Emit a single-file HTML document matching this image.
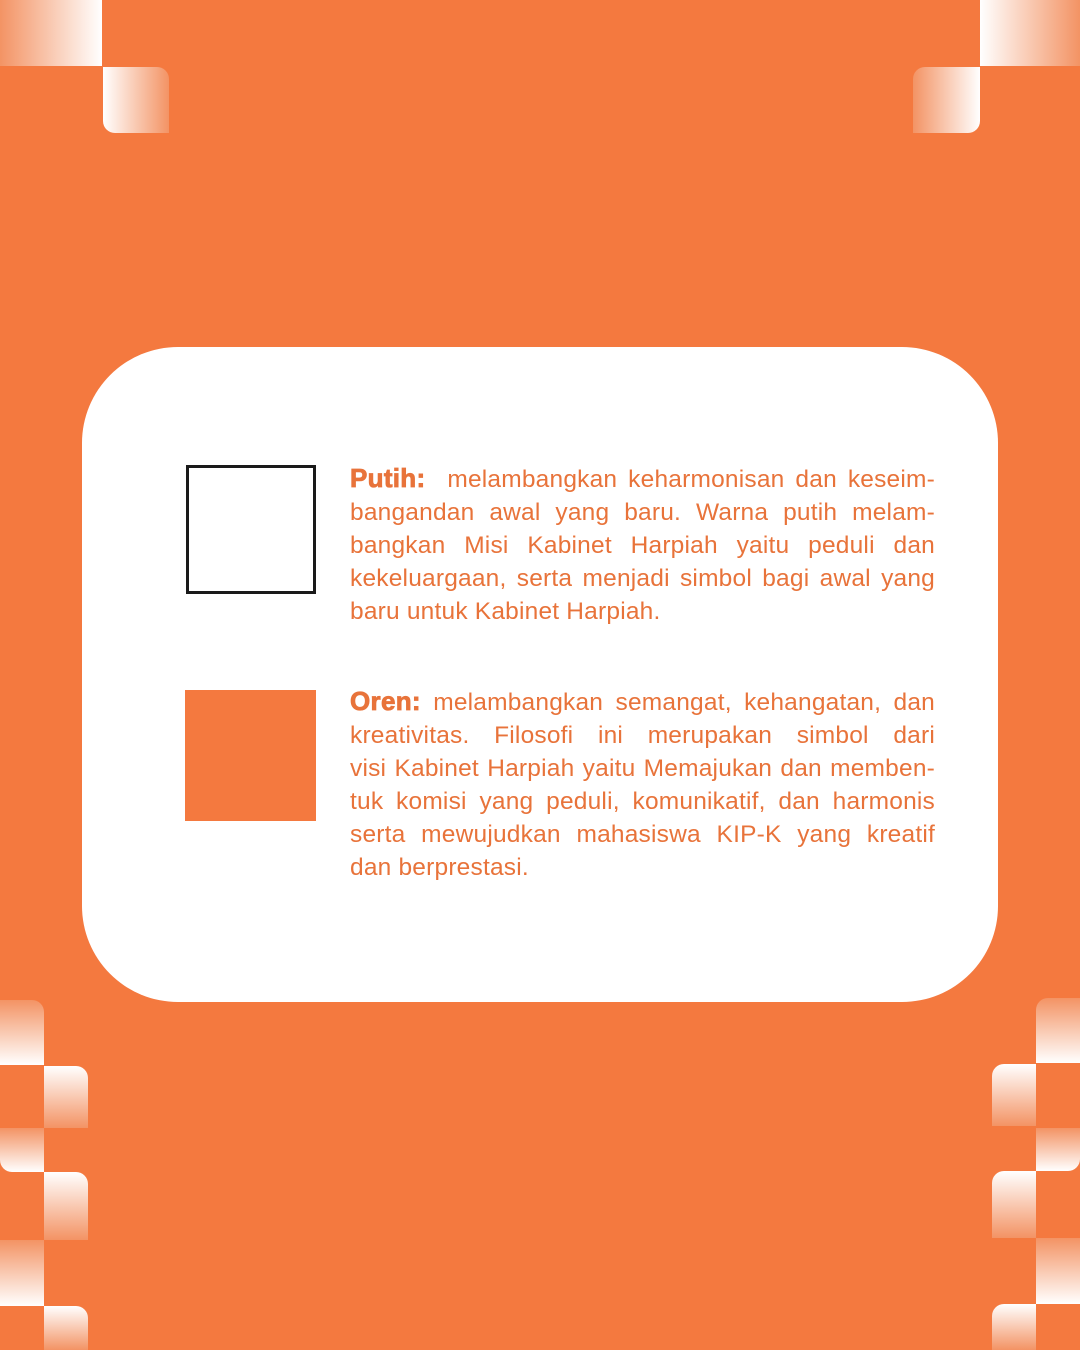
<!DOCTYPE html>
<html><head><meta charset="utf-8"><style>
*{margin:0;padding:0;box-sizing:border-box}
body{width:1080px;height:1350px;background:#F4793F;position:relative;overflow:hidden;font-family:"Liberation Sans",sans-serif}
.b{position:absolute}
.lr{background:linear-gradient(to right,#F39364,#fff)}
.rl{background:linear-gradient(to right,#fff,#F39364)}
.tb{background:linear-gradient(to bottom,#F39364,#fff)}
.bt{background:linear-gradient(to bottom,#fff,#F39364)}
.card{position:absolute;left:82px;top:347px;width:916px;height:655px;background:#fff;border-radius:96px}
.sq1{position:absolute;left:186px;top:465px;width:130px;height:129px;border:3px solid #1a1a1a}
.sq2{position:absolute;left:185px;top:690px;width:131px;height:131px;background:#F4793F}
.txt{position:absolute;left:350px;width:585px;color:#E8733A;font-size:24.5px;line-height:33px;letter-spacing:0.2px}
.txt div{text-align:justify;text-align-last:justify;white-space:nowrap}
.txt div.last{text-align-last:left}
.txt b{font-weight:900;font-size:26px;letter-spacing:0.3px;-webkit-text-stroke:0.8px #E8733A}
</style></head><body>
<div class="b lr" style="left:0;top:0;width:102px;height:66px"></div>
<div class="b rl" style="left:103px;top:67px;width:66px;height:66px;border-radius:0 12px 0 12px"></div>
<div class="b rl" style="left:980px;top:0;width:100px;height:66px"></div>
<div class="b lr" style="left:913px;top:67px;width:67px;height:66px;border-radius:12px 0 12px 0"></div>

<div class="b tb" style="left:0;top:1000px;width:44px;height:65px;border-radius:0 12px 0 0"></div>
<div class="b bt" style="left:44px;top:1066px;width:44px;height:62px;border-radius:0 12px 0 0"></div>
<div class="b tb" style="left:0;top:1128px;width:44px;height:44px;border-radius:0 0 0 12px"></div>
<div class="b bt" style="left:44px;top:1172px;width:44px;height:68px;border-radius:0 12px 0 0"></div>
<div class="b tb" style="left:0;top:1240px;width:44px;height:66px"></div>
<div class="b bt" style="left:44px;top:1306px;width:44px;height:44px;border-radius:0 12px 0 0"></div>

<div class="b tb" style="left:1036px;top:998px;width:44px;height:65px;border-radius:12px 0 0 0"></div>
<div class="b bt" style="left:992px;top:1064px;width:44px;height:62px;border-radius:12px 0 0 0"></div>
<div class="b tb" style="left:1036px;top:1128px;width:44px;height:43px;border-radius:0 0 12px 0"></div>
<div class="b bt" style="left:992px;top:1171px;width:44px;height:67px;border-radius:12px 0 0 0"></div>
<div class="b tb" style="left:1036px;top:1238px;width:44px;height:66px"></div>
<div class="b bt" style="left:992px;top:1304px;width:44px;height:46px;border-radius:12px 0 0 0"></div>

<div class="card"></div>
<div class="sq1"></div>
<div class="sq2"></div>
<div class="txt" style="top:462px">
<div><b>Putih:</b>&nbsp; melambangkan keharmonisan dan keseim-</div>
<div>bangandan awal yang baru. Warna putih melam-</div>
<div>bangkan Misi Kabinet Harpiah yaitu peduli dan</div>
<div>kekeluargaan, serta menjadi simbol bagi awal yang</div>
<div class="last">baru untuk Kabinet Harpiah.</div>
</div>
<div class="txt" style="top:685px">
<div><b>Oren:</b> melambangkan semangat, kehangatan, dan</div>
<div>kreativitas. Filosofi ini merupakan simbol dari</div>
<div>visi Kabinet Harpiah yaitu Memajukan dan memben-</div>
<div>tuk komisi yang peduli, komunikatif, dan harmonis</div>
<div>serta mewujudkan mahasiswa KIP-K yang kreatif</div>
<div class="last">dan berprestasi.</div>
</div>
</body></html>
